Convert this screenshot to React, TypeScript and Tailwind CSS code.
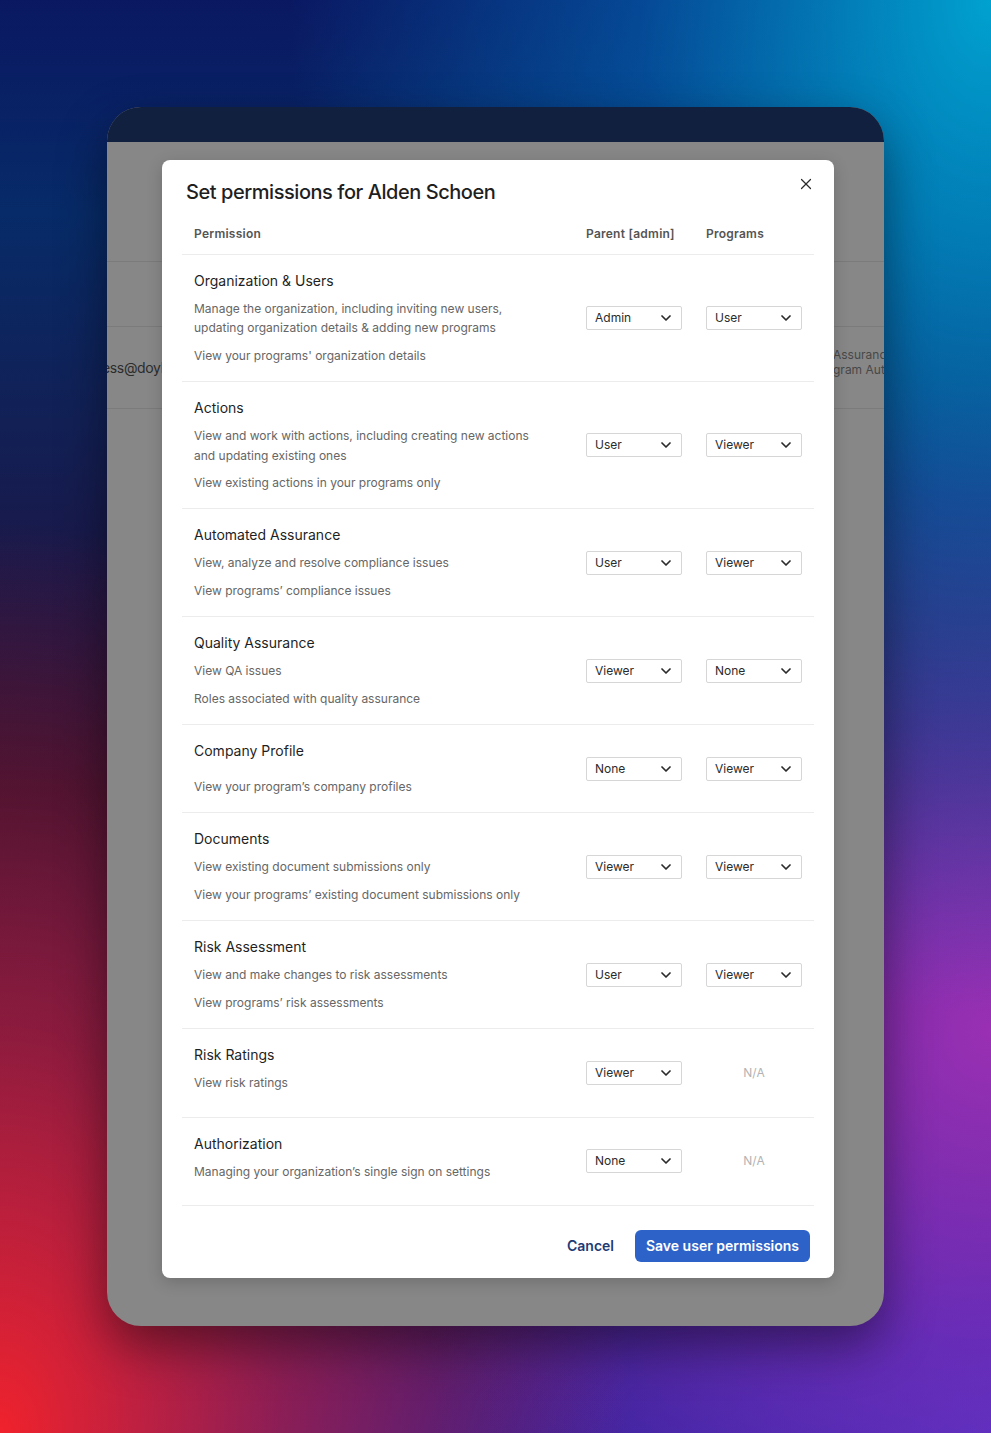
import { X } from 'lucide-react';

type Row = {
  title: string;
  lines: string[];
  parent: string;
  programs: string | null;
};

const ROWS: Row[] = [
  {
    title: 'Organization & Users',
    lines: [
      'Manage the organization, including inviting new users,\nupdating organization details & adding new programs',
      "View your programs' organization details",
    ],
    parent: 'Admin',
    programs: 'User',
  },
  {
    title: 'Actions',
    lines: [
      'View and work with actions, including creating new actions\nand updating existing ones',
      'View existing actions in your programs only',
    ],
    parent: 'User',
    programs: 'Viewer',
  },
  {
    title: 'Automated Assurance',
    lines: ['View, analyze and resolve compliance issues', 'View programs’ compliance issues'],
    parent: 'User',
    programs: 'Viewer',
  },
  {
    title: 'Quality Assurance',
    lines: ['View QA issues', 'Roles associated with quality assurance'],
    parent: 'Viewer',
    programs: 'None',
  },
  {
    title: 'Company Profile',
    lines: ['', 'View your program’s company profiles'],
    parent: 'None',
    programs: 'Viewer',
  },
  {
    title: 'Documents',
    lines: ['View existing document submissions only', 'View your programs’ existing document submissions only'],
    parent: 'Viewer',
    programs: 'Viewer',
  },
  {
    title: 'Risk Assessment',
    lines: ['View and make changes to risk assessments', 'View programs’ risk assessments'],
    parent: 'User',
    programs: 'Viewer',
  },
  {
    title: 'Risk Ratings',
    lines: ['View risk ratings', ''],
    parent: 'Viewer',
    programs: null,
  },
  {
    title: 'Authorization',
    lines: ['Managing your organization’s single sign on settings', ''],
    parent: 'None',
    programs: null,
  },
];

const Select = ({ value }: { value: string }) => (
  <div className="flex h-6 w-24 items-center justify-between rounded-[2px] border border-[#d6d6d6] bg-white pl-2 pr-[10px] text-xs text-[#2b2b2b]">
    <span>{value}</span>
    <svg width="10" height="6" viewBox="0 0 10 6" fill="none">
      <path d="M1 1l4 4 4-4" stroke="#2b2b2b" strokeWidth="1.7" strokeLinecap="round" strokeLinejoin="round" />
    </svg>
  </div>
);

export default function App() {
  return (
    <div
      className="flex min-h-[1433px] w-full justify-center pt-[107px] font-['Inter','Liberation_Sans',sans-serif] bg-[radial-gradient(ellipse_at_100%_0%,#00a2cf_0%,rgba(0,120,200,0.5)_25%,transparent_50%),radial-gradient(ellipse_at_0%_100%,#f0222c_0%,rgba(200,30,50,0.6)_20%,transparent_45%),radial-gradient(ellipse_at_100%_72%,#9a30b4_0%,rgba(130,40,180,0.5)_22%,transparent_45%),radial-gradient(ellipse_at_100%_100%,#4d34c4_0%,transparent_40%),linear-gradient(180deg,#0a1862_0%,#072b68_15%,#1a1848_40%,#1d0f30_55%,#3a1a5e_80%,#2f1e8e_100%)]"
    >
      <div className="relative h-[1219px] w-[777px] overflow-hidden rounded-[34px] bg-[#878787] shadow-[0_20px_50px_rgba(0,0,0,0.45)]">
        <div className="h-[35px] bg-[#12203f]" />

        {/* page underneath the overlay */}
        <div className="h-[120px] border-b border-[#7b7b7b]" />
        <div className="h-[65px] border-b border-[#7b7b7b]" />
        <div className="flex h-[82px] items-center justify-between border-b border-[#7b7b7b]">
          <span className="-ml-[5px] whitespace-nowrap text-sm tracking-[-0.35px] text-[#2c2c2c]">ess@doyle.com</span>
          <div className="-mt-[12px] w-[51px] overflow-hidden whitespace-nowrap text-xs leading-[15px] text-[#474747]">
            <div>Assurance</div>
            <div>gram Automation</div>
          </div>
        </div>

        {/* modal */}
        <div className="absolute left-[55px] top-[53px] w-[672px] rounded-lg bg-white px-5 shadow-[0_4px_16px_rgba(0,0,0,0.18)]">
          <div className="flex items-start justify-between pt-[21px]">
            <h2 className="pl-1 text-xl font-medium leading-[22px] tracking-[-0.45px] text-[#1f1f1f]">
              Set permissions for Alden Schoen
            </h2>
            <X size={18} strokeWidth={1.6} className="mr-[-1px] mt-[-6px] text-[#2b2b2b]" />
          </div>

          <div className="mt-[11px] grid h-[41px] grid-cols-[1fr_96px_96px] items-center gap-x-6 border-b border-[#ececec] px-3 text-xs font-semibold tracking-[0.25px] text-[#555]">
            <span>Permission</span>
            <span>Parent [admin]</span>
            <span>Programs</span>
          </div>

          {ROWS.map((row) => (
            <div
              key={row.title}
              className="grid grid-cols-[1fr_96px_96px] items-center gap-x-6 border-b border-[#ececec] px-3 py-4"
            >
              <div className="flex flex-col gap-2">
                <div className="text-sm leading-5 text-[#1f1f1f]">{row.title}</div>
                {row.lines.map((line, i) => (
                  <p key={i} className="whitespace-pre-line text-xs leading-[19.4px] text-[#666]">
                    {line}
                  </p>
                ))}
              </div>
              <Select value={row.parent} />
              {row.programs ? (
                <Select value={row.programs} />
              ) : (
                <span className="text-center text-xs text-[#b3b3b3]">N/A</span>
              )}
            </div>
          ))}

          <div className="flex items-center justify-end gap-[21px] pb-4 pr-1 pt-6">
            <button className="text-sm font-semibold text-[#1e3a74]">Cancel</button>
            <button className="h-8 w-[175px] rounded-md bg-[#2d63c9] text-sm font-semibold text-white">
              Save user permissions
            </button>
          </div>
        </div>
      </div>
    </div>
  );
}
